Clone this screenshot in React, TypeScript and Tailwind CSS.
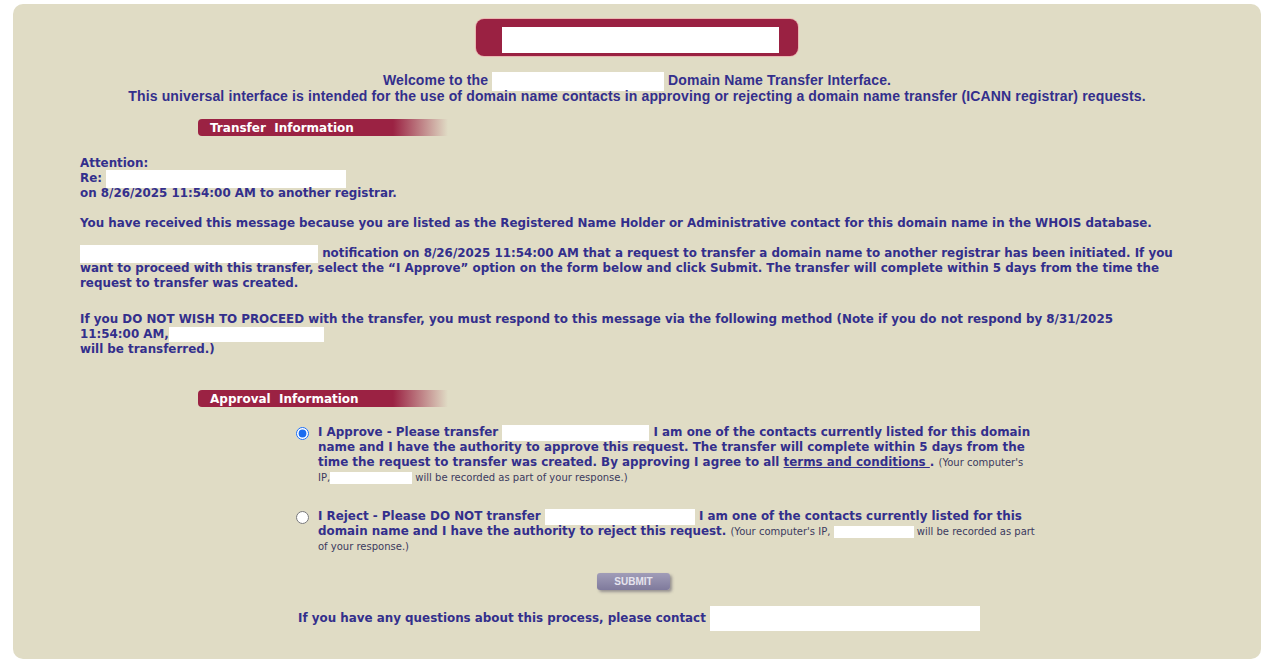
import React from "react";

const body = "font-['DejaVu_Sans',Verdana,sans-serif] font-bold text-[11.9px] leading-[15px] text-[#332f8c]";
const small = "font-['DejaVu_Sans',Verdana,sans-serif] font-normal text-[10px] leading-[14px] text-[#3b3a5e]";

// white placeholder box that does not stretch the line it sits in
function Blank({ w, h = 18 }: { w: number; h?: number }) {
  const pull = -Math.ceil((h - 12) / 2);
  return (
    <span
      className="inline-block bg-white align-middle"
      style={{ width: w, height: h, marginTop: pull, marginBottom: pull }}
    />
  );
}

function SectionBar({ title }: { title: string }) {
  return (
    <div className="ml-[185px] flex h-[17px] w-[250px] items-center rounded-l-[4px] bg-[linear-gradient(to_right,#9b2243_0%,#9b2243_78%,rgba(155,34,67,0)_100%)] pl-[12px]">
      <span className="whitespace-pre font-['DejaVu_Sans',Verdana,sans-serif] text-[12px] font-bold text-white">
        {title}
      </span>
    </div>
  );
}

export default function App() {
  return (
    <div className="min-h-[671px] bg-white pt-[4px]">
      <div className="ml-[13px] h-[655px] w-[1248px] rounded-[10px] bg-[#e0dcc5] pt-[15px]">
        {/* banner */}
        <div className="flex justify-center">
          <div className="h-[37px] w-[322px] rounded-[8px] bg-[#9a2142] pl-[26px] pt-[8px] shadow-[0_0_0_1px_#e9b7b2]">
            <div className="h-[26px] w-[277px] bg-white" />
          </div>
        </div>

        <div className="mt-[16px] text-center font-['Liberation_Sans',Tahoma,sans-serif] text-[14px] font-bold leading-[16px] tracking-[0.14px] text-[#332f8c]">
          <div>
            Welcome to the <Blank w={172} h={19} /> Domain Name Transfer Interface.
          </div>
          <div>
            This universal interface is intended for the use of domain name contacts in approving or rejecting a domain name transfer (ICANN registrar) requests.
          </div>
        </div>

        <div className="mt-[15px]">
          <SectionBar title="Transfer  Information" />
        </div>

        <div className={`${body} ml-[67px] mt-[20px] w-[1094px]`}>
          <div>Attention:</div>
          <div>
            Re: <Blank w={240} />
          </div>
          <div>on 8/26/2025 11:54:00 AM to another registrar.</div>
          <div className="mt-[15px]">
            You have received this message because you are listed as the Registered Name Holder or Administrative contact for this domain name in the WHOIS database.
          </div>
          <div className="mt-[15px]">
            <Blank w={238} /> notification on 8/26/2025 11:54:00 AM that a request to transfer a domain name to another registrar has been initiated. If you want to proceed with this transfer, select the “I Approve” option on the form below and click Submit. The transfer will complete within 5 days from the time the request to transfer was created.
          </div>
          <div className="mt-[21px]">
            If you DO NOT WISH TO PROCEED with the transfer, you must respond to this message via the following method (Note if you do not respond by 8/31/2025 11:54:00 AM,<Blank w={155} h={15} />
            <br />
            will be transferred.)
          </div>
        </div>

        <div className="mt-[33px]">
          <SectionBar title="Approval  Information" />
        </div>

        <div className="ml-[283px] mt-[18px] w-[744px]">
          <label className="flex items-start gap-[9px]">
            <input type="radio" name="choice" defaultChecked className="mt-[2px] h-[13px] w-[13px] shrink-0 accent-[#1a6cf0]" />
            <div className={`${body} w-[716px]`}>
              I Approve - Please transfer <Blank w={147} h={16} /> I am one of the contacts currently listed for this domain name and I have the authority to approve this request. The transfer will complete within 5 days from the time the request to transfer was created. By approving I agree to all{" "}
              <a href="#" className="underline">terms and conditions </a>.{" "}
              <span className={small}>
                (Your computer's IP,<Blank w={82} h={12} /> will be recorded as part of your response.)
              </span>
            </div>
          </label>

          <label className="mt-[24px] flex items-start gap-[9px]">
            <input type="radio" name="choice" className="mt-[2px] h-[13px] w-[13px] shrink-0" />
            <div className={body}>
              I Reject - Please DO NOT transfer <Blank w={150} h={16} /> I am one of the contacts currently listed for this domain name and I have the authority to reject this request.{" "}
              <span className={small}>
                (Your computer's IP, <Blank w={80} h={12} /> will be recorded as part of your response.)
              </span>
            </div>
          </label>
        </div>

        <div className="mt-[19px] flex justify-center pr-[7px]">
          <button className="h-[17px] w-[73px] rounded-[3px] bg-[linear-gradient(#a19db8,#7f7a9c)] font-['Liberation_Sans',Arial,sans-serif] text-[10px] font-bold leading-[17px] text-[#e6e4ee] shadow-[2px_2px_3px_rgba(60,55,80,0.45)]">
            SUBMIT
          </button>
        </div>

        <div className={`${body} mt-[21px] flex items-center justify-center pl-[4px]`}>
          If you have any questions about this process, please contact&nbsp;<Blank w={270} h={25} />
        </div>
      </div>
    </div>
  );
}
